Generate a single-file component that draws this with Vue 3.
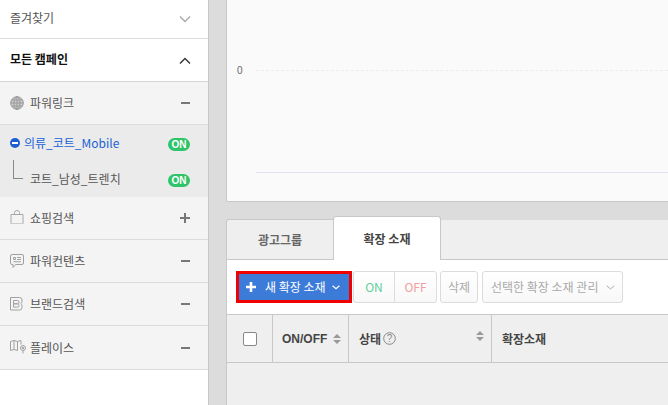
<script setup>
const groups = [
  { name: '쇼핑검색', icon: 'bag', sign: 'plus' },
  { name: '파워컨텐츠', icon: 'chat', sign: 'minus' },
  { name: '브랜드검색', icon: 'brand', sign: 'minus' },
  { name: '플레이스', icon: 'map', sign: 'minus' },
]
</script>

<template>
  <div class="page">
    <aside class="side">
      <div class="row fav">
        <span class="up">즐겨찾기</span>
        <svg class="chev" width="14" height="8" viewBox="0 0 14 8"><path d="M2 1.500 7 6.500 12 1.500" fill="none" stroke="#aaa" stroke-width="1.400" /></svg>
      </div>
      <div class="row all">
        <span class="up">모든 캠페인</span>
        <svg class="chev low" width="14" height="8" viewBox="0 0 14 8"><path d="M2 6.500 7 1.500 12 6.500" fill="none" stroke="#333" stroke-width="1.400" /></svg>
      </div>
      <div class="row grp">
        <span class="lab">
          <svg class="ico" width="14" height="14" viewBox="0 0 14 14" fill="none" stroke="#999" stroke-width="1"><circle cx="7" cy="7" r="6.300" fill="#ccc" /><ellipse cx="7" cy="7" rx="3" ry="6.300" /><path d="M7 .7v12.600M.7 7h12.600M1.600 4h10.800M1.600 10h10.800" /></svg>
          파워링크
        </span>
        <i class="minus"></i>
      </div>
      <div class="active">
        <div class="camp">
          <span class="lab blue">
            <svg class="dot" width="10" height="10" viewBox="0 0 10 10"><circle cx="5" cy="5" r="5" fill="#1d5fd0" /><rect x="2" y="4" width="6" height="2" fill="#fff" /></svg>
            <span class="up">의류_코트_Mobile</span>
          </span>
          <span class="on">ON</span>
        </div>
        <div class="camp sub">
          <span class="elbow"></span>
          <span class="subname up">코트_남성_트렌치</span>
          <span class="on">ON</span>
        </div>
      </div>
      <div v-for="g in groups" :key="g.name" class="row grp" :class="g.icon">
        <span class="lab">
          <svg v-if="g.icon === 'bag'" class="ico" width="14" height="14" viewBox="0 0 14 14" fill="none" stroke="#a8a8a8"><path d="M1 13.500V4.500h12v9z" /><path d="M.5 13.500h13" stroke="#ccc" /><path d="M4.500 4.500V2.500Q4.500.5 7 .5t2.500 2v2" /></svg>
          <svg v-else-if="g.icon === 'chat'" class="ico" width="14" height="14" viewBox="0 0 14 14" fill="none" stroke="#a0a0a0"><path d="M2 .5h10q1.500 0 1.500 1.500v7q0 1.500-1.500 1.500H5.500L3 13.500v-3H2Q.5 10.500.5 9V2Q.5.5 2 .5z" /><path d="M3.500 3.500h2v2h-2zM7 3.500h4M7 5.500h4M3.500 7.800h7.500" /></svg>
          <svg v-else-if="g.icon === 'brand'" class="ico" width="14" height="14" viewBox="0 0 14 14" fill="none" stroke="#a0a0a0"><path d="M.5.5h9q2.500 0 2.500 2.500v1.500Q12 6 10.800 6.800 12 7.500 12 9v1.500q0 2.500-2.500 2.500H.5z" /><path d="M3.500 3.500h4q1.500 0 1.500 1.500T7.500 6.800h-4zM3.500 6.800h4q1.500 0 1.500 1.800t-1.500 1.500h-4z" /></svg>
          <svg v-else class="ico wide" width="16" height="14" viewBox="0 0 16 14" fill="none" stroke="#a0a0a0"><path d="M.5 1.500 4 .5l3.500 1L11 .5v4M.5 1.500v9L4 9.500l3.500 1M4 .5v9M7.500 1.500v9" /><circle cx="13" cy="8" r="2.500" /><circle cx="13" cy="8" r=".8" fill="#a0a0a0" /><path d="M13 10.500v3" /></svg>
          {{ g.name }}
        </span>
        <svg v-if="g.sign === 'plus'" class="sign" width="10" height="10" viewBox="0 0 10 10"><path d="M0 5h10M5 0v10" stroke="#777" stroke-width="2" /></svg>
        <i v-else class="minus"></i>
      </div>
    </aside>

    <main class="main">
      <section class="chart">
        <span class="zero">0</span>
        <div class="plot">
          <div class="dash"></div>
          <div class="axis"></div>
        </div>
      </section>

      <section class="panel">
        <div class="tabs">
          <div class="tab">광고그룹</div>
          <div class="tab cur">확장 소재</div>
        </div>
        <div class="tools">
          <button class="new">
            <svg width="10" height="10" viewBox="0 0 10 10"><path d="M0 5h10M5 0v10" stroke="#fff" stroke-width="2.600" /></svg>
            <span>새 확장 소재</span>
            <svg width="8" height="5" viewBox="0 0 8 5"><path d="M.6.8 4 3.800 7.400.8" fill="none" stroke="#fff" stroke-width="1.200" /></svg>
          </button>
          <div class="pair">
            <span class="g">ON</span>
            <span class="r">OFF</span>
          </div>
          <div class="btn del">삭제</div>
          <div class="btn mng">
            선택한 확장 소재 관리
            <svg width="9" height="5" viewBox="0 0 9 5"><path d="M.8.8 4.500 4 8.200.8" fill="none" stroke="#aaa" stroke-width="1" /></svg>
          </div>
        </div>
        <div class="thead">
          <div class="c c1"><span class="box"></span></div>
          <div class="c c2"><span class="onoff">ON/OFF</span>
            <svg class="sort" width="8" height="10" viewBox="0 0 8 10"><path d="M4 0 8 4H0zM0 6h8L4 10z" fill="#999" /></svg>
          </div>
          <div class="c c3">
            <span class="st">상태
              <svg width="13" height="13" viewBox="0 0 13 13"><circle cx="6.500" cy="6.500" r="5.800" fill="none" stroke="#888" /><text x="6.500" y="10" text-anchor="middle" class="q">?</text></svg>
            </span>
            <svg class="sort hi" width="8" height="10" viewBox="0 0 8 10"><path d="M4 0 8 4H0zM0 6h8L4 10z" fill="#999" /></svg>
          </div>
          <div class="c c4">확장소재</div>
        </div>
        <div class="tbody"></div>
      </section>
    </main>
  </div>
</template>

<style>
html, body { margin: 0; background: #dcdcdc; overflow: hidden; }
</style>

<style scoped>
.page {
  display: flex;
  width: 668px;
  height: 405px;
  overflow: hidden;
  background: #dcdcdc;
  font: 12px/16px "Noto Sans CJK KR", "Noto Sans", sans-serif;
  color: #555;
}
.side {
  width: 208px;
  height: 405px;
  flex: none;
  background: #fff;
  border-right: 1px solid #c8c8c8;
}
.row {
  display: flex;
  align-items: center;
  justify-content: space-between;
  box-sizing: border-box;
  padding: 0 18px 0 10px;
  border-bottom: 1px solid #dcdcdc;
}
.up { margin-bottom: 2px; }
.fav { height: 39px; }
.all { height: 43px; color: #111; font-weight: 700; border-bottom-color: #d4d4d4; }
.grp { height: 43px; background: #f4f4f4; }
.grp.map { height: 44px; }
.lab { display: flex; align-items: center; gap: 6px; }
.ico { flex: none; }
.ico.wide { margin-right: -2px; margin-bottom: 2px; }
.bag .ico { margin-bottom: 2px; }
.chat .ico, .brand .ico { margin-bottom: 0; }
.minus { display: block; width: 9px; height: 2px; background: #777; margin-right: 0.500px; }
.chev { margin-right: -2px; }
.low { margin-top: 2px; }
.sign { margin-right: 0; }
.active { height: 72px; background: #ebebeb; padding-top: 1px; box-sizing: border-box; }
.camp { height: 36px; display: flex; align-items: center; justify-content: space-between; padding: 0 18px 0 10px; }
.blue { color: #1a62d6; gap: 4px; }
.dot { margin-bottom: 3px; }
.on {
  width: 22px;
  height: 13px;
  border-radius: 7px;
  background: #2fc469;
  color: #fff;
  font: 700 10px/13px "Liberation Sans", sans-serif;
  text-align: center;
}
.sub { position: relative; justify-content: flex-start; padding-left: 30px; }
.sub .on { margin-left: auto; }
.elbow {
  position: absolute;
  left: 13px;
  top: -2px;
  width: 9px;
  height: 18px;
  border-left: 1px solid #888;
  border-bottom: 1px solid #888;
}
.main { flex: 1; min-width: 0; padding-left: 17px; }
.chart {
  position: relative;
  box-sizing: border-box;
  height: 202px;
  background: #fafafa;
  border-left: 1px solid #c8c8c8;
  border-bottom: 1px solid #c8c8c8;
  border-bottom-left-radius: 2px;
}
.zero { position: absolute; left: 10px; top: 63px; font: 10px/16px "Liberation Sans", sans-serif; color: #666; }
.plot { position: absolute; left: 29px; right: 0; top: 70px; height: 103px; }
.dash { border-top: 1px dashed #ececec; }
.axis { position: absolute; left: 0; right: 0; bottom: 0; border-top: 1px solid #dfe3ea; }
.panel {
  margin-top: 14px;
  height: 189px;
  display: flex;
  flex-direction: column;
}
.tabs {
  display: flex;
  align-items: flex-end;
  box-sizing: border-box;
  height: 44px;
  background: linear-gradient(#dcdcdc 4px, #efefef 4px);
  border-bottom: 1px solid #c8c8c8;
  position: relative;
}
.tab {
  box-sizing: border-box;
  width: 107px;
  height: 40px;
  display: flex;
  align-items: center;
  justify-content: center;
  font-weight: 700;
  color: #666;
  background: #efefef;
  border-top: 1px solid #c8c8c8;
  border-left: 1px solid #c8c8c8;
  border-top-left-radius: 3px;
}
.tab.cur {
  width: 108px;
  height: 44px;
  margin-bottom: -1px;
  background: #fff;
  color: #444;
  border: 1px solid #c8c8c8;
  border-bottom: 0;
  border-radius: 3px 3px 0 0;
}
.tools {
  height: 54px;
  box-sizing: border-box;
  background: #fff;
  border-left: 1px solid #c8c8c8;
  padding: 11px 0 0 9px;
  display: flex;
  align-items: flex-start;
}
.new {
  box-sizing: border-box;
  width: 116px;
  height: 32px;
  display: flex;
  align-items: center;
  padding: 0 0 0 7px;
  border: 3px solid #f00000;
  background: #3d7bd8;
  color: #fff;
  font: 12px/16px "Noto Sans CJK KR", sans-serif;
}
.new span { margin: 0 6px 0 9px; white-space: nowrap; }
.pair, .btn {
  box-sizing: border-box;
  height: 32px;
  border: 1px solid #dcdcdc;
  border-radius: 3px;
  background: linear-gradient(#fff, #f8f8f8);
  color: #aaa;
  display: flex;
  align-items: center;
}
.pair { width: 84px; margin-left: 1px; }
.pair span { flex: 1; height: 100%; display: flex; align-items: center; justify-content: center; }
.pair .g { color: #62ce9a; border-right: 1px solid #dcdcdc; width: 40px; flex: none; }
.pair .r { color: #f0a0a0; }
.del { width: 38px; margin-left: 3px; justify-content: center; }
.mng { width: 141px; margin-left: 4px; padding-left: 8px; gap: 8px; white-space: nowrap; }
.thead {
  height: 49px;
  box-sizing: border-box;
  display: flex;
  background: #efefef;
  border-top: 1px solid #c8c8c8;
  border-bottom: 1px solid #c8c8c8;
  border-left: 1px solid #c8c8c8;
  font-weight: 700;
  color: #444;
}
.c { box-sizing: border-box; display: flex; align-items: center; border-right: 1px solid #c8c8c8; }
.c1 { width: 46px; padding-left: 16px; }
.box { box-sizing: border-box; width: 14px; height: 14px; background: #fff; border: 1px solid #888; border-radius: 2px; }
.c2 { width: 76px; padding-left: 9px; justify-content: space-between; padding-right: 7px; }
.onoff { font-family: "Liberation Sans", sans-serif; }
.c3 { width: 143px; padding: 0 7px 0 10px; justify-content: space-between; }
.hi { margin-bottom: 5px; }
.st { display: flex; align-items: center; gap: 2px; }
.q { font: 400 10px "Liberation Sans", sans-serif; fill: #888; }
.c4 { flex: 1; border-right: 0; padding-left: 10px; }
.tbody { flex: 1; background: #efefef; border-left: 1px solid #c8c8c8; }
</style>
